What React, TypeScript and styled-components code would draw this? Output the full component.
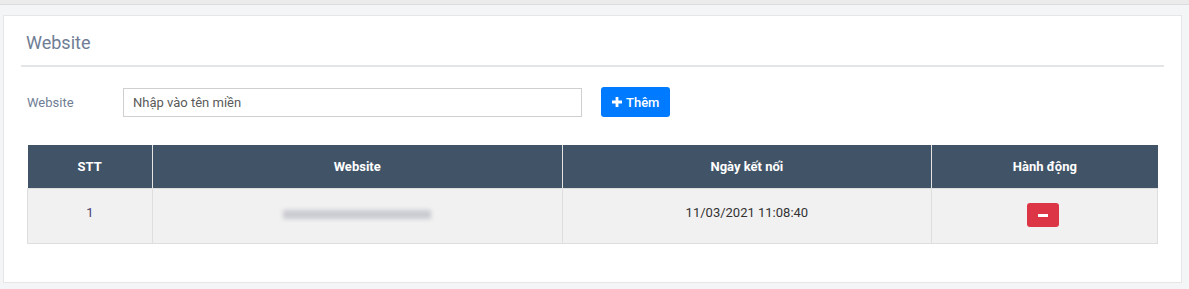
import React from 'react';
import styled, { createGlobalStyle } from 'styled-components';

const GlobalStyle = createGlobalStyle`
  body {
    margin: 0;
    background: #f4f5f7;
    font-family: Roboto, 'Liberation Sans', Arial, sans-serif;
  }
`;

const TopBar = styled.div`
  height: 4px;
  background: #ebebeb;
  border-bottom: 1px solid #dcdcdc;
`;

const Page = styled.div`
  padding: 10px 7px 0 3px;
`;

const Card = styled.div`
  background: #fff;
  border: 1px solid #e6e6e6;
  padding: 0 17px 38px 17px;
`;

const CardHeader = styled.div`
  border-bottom: 2px solid #e3e5e6;
  padding: 16px 0 11px 5px;
`;

const Title = styled.h3`
  margin: 0;
  font-size: 18px;
  font-weight: 400;
  line-height: 22px;
  color: #6f7d95;
`;

const FormRow = styled.div`
  display: flex;
  align-items: center;
  padding: 20px 0 0 6px;
`;

const Label = styled.label`
  width: 96px;
  font-size: 13px;
  color: #6f7d95;
`;

const Input = styled.input`
  width: 459px;
  height: 29px;
  box-sizing: border-box;
  border: 1px solid #cfcfcf;
  padding: 0 9px;
  font-family: inherit;
  font-size: 13px;
  color: #333;
  outline: none;
  &::placeholder {
    color: #5a5a5a;
  }
`;

const AddButton = styled.button`
  margin-left: 19px;
  height: 30px;
  padding: 0 11px 0 11px;
  border: none;
  border-radius: 3px;
  background: #007bff;
  color: #fff;
  font-family: inherit;
  font-size: 13px;
  font-weight: 500;
  display: flex;
  align-items: center;
  gap: 4px;
  cursor: pointer;
`;

const Table = styled.table`
  margin: 28px 0 0 6px;
  width: 1131px;
  border-collapse: collapse;
  font-size: 13px;
`;

const Th = styled.th<{ $w: number }>`
  width: ${p => p.$w}px;
  height: 43px;
  box-sizing: border-box;
  background: #415467;
  color: #fff;
  font-weight: 700;
  text-align: center;
  border-left: 1px solid #e4e4e4;
  &:first-child { border-left: none; }
`;

const Td = styled.td`
  height: 55px;
  box-sizing: border-box;
  background: #f1f1f1;
  color: #333;
  text-align: center;
  vertical-align: top;
  padding-top: 16px;
  border: 1px solid #dedede;
  font-size: 13px;
`;

const Index = styled.span`
  color: #4a3f6e;
`;

const Blurred = styled.span`
  display: inline-block;
  width: 148px;
  height: 9px;
  margin-top: 5px;
  background: #c9cbd1;
  filter: blur(2px);
`;

const DeleteButton = styled.button`
  width: 32px;
  height: 24px;
  margin-top: -2px;
  margin-right: 4px;
  border: none;
  border-radius: 3px;
  background: #dc3545;
  display: inline-flex;
  align-items: center;
  justify-content: center;
  cursor: pointer;
  &::after {
    content: '';
    width: 10px;
    height: 3px;
    background: #fff;
  }
`;

const PlusIcon = () => (
  <svg width="10" height="10" viewBox="0 0 10 10">
    <path d="M3.6 0h2.8v3.6H10v2.8H6.4V10H3.6V6.4H0V3.6h3.6z" fill="#fff" />
  </svg>
);

export default function App() {
  return (
    <>
      <GlobalStyle />
      <TopBar />
      <Page>
        <Card>
          <CardHeader>
            <Title>Website</Title>
          </CardHeader>
          <FormRow>
            <Label>Website</Label>
            <Input placeholder="Nhập vào tên miền" />
            <AddButton>
              <PlusIcon />
              Thêm
            </AddButton>
          </FormRow>
          <Table>
            <thead>
              <tr>
                <Th $w={125}>STT</Th>
                <Th $w={410}>Website</Th>
                <Th $w={370}>Ngày kết nối</Th>
                <Th $w={226}>Hành động</Th>
              </tr>
            </thead>
            <tbody>
              <tr>
                <Td><Index>1</Index></Td>
                <Td><Blurred /></Td>
                <Td>11/03/2021 11:08:40</Td>
                <Td><DeleteButton aria-label="Xóa" /></Td>
              </tr>
            </tbody>
          </Table>
        </Card>
      </Page>
    </>
  );
}
